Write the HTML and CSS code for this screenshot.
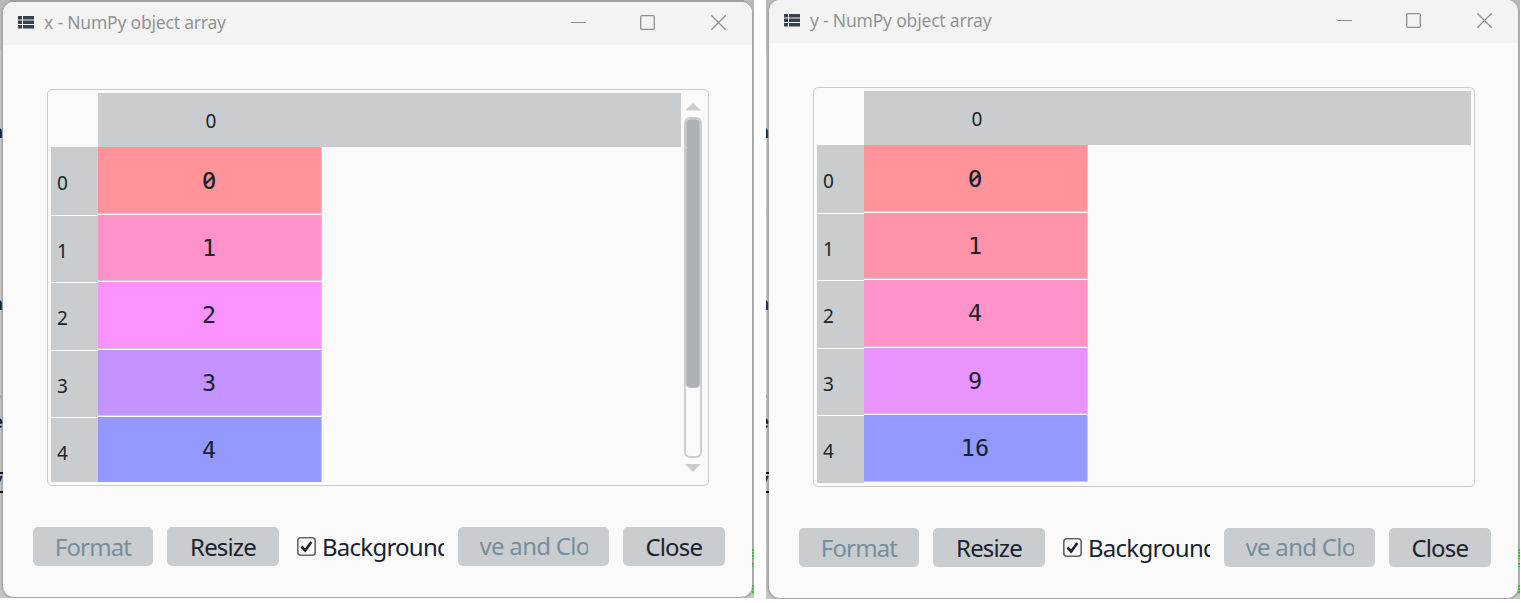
FILE: index.html
```
<!DOCTYPE html>
<html lang="en">
<head>
<meta charset="utf-8">
<title>NumPy object arrays</title>
<link rel="stylesheet" href="styles.css">
</head>
<body>
<main class="screens">
  <section class="desktop desktop-x">
    <div class="behind" aria-hidden="true">
      <i class="peek p1">a</i><i class="peek p2">a</i><i class="peek p3">e</i><i class="peek p4">7</i>
      <i class="green g1"></i><i class="green g2"></i><i class="green g3"></i>
    </div>
    <div class="window">
      <header class="titlebar">
        <svg class="app-icon" width="16" height="13" viewBox="0 0 16 13"><path fill="#36404e" d="M0 0h4v3.500H0zM5 0h11v3.500H5zM0 4.500h4v3.500H0zM5 4.500h11v3.500H5zM0 9h4v3.500H0zM5 9h11v3.500H5z"/></svg>
        <h1 class="title">x - NumPy object array</h1>
        <svg class="controls" width="156" height="16" viewBox="0 0 156 16" fill="none" stroke="#8f8f8f" stroke-width="1.3"><path stroke-width="1" d="M0 7.500h15"/><rect x="69.700" y=".7" width="13.600" height="13.600" rx="1.200"/><path d="M140.300.3l14.400 14.400M154.700.3l-14.400 14.400"/></svg>
      </header>
      <div class="table">
        <div class="index">
          <div class="corner"></div>
          <div class="rh">0</div><div class="rh">1</div><div class="rh">2</div><div class="rh">3</div><div class="rh">4</div>
        </div>
        <div class="data">
          <div class="colhead"><span>0</span></div>
          <div class="cell red">0</div><div class="cell pink">1</div><div class="cell magenta">2</div><div class="cell purple">3</div><div class="cell blue">4</div>
        </div>
        <div class="scroll">
          <svg width="16" height="8" viewBox="0 0 16 8"><path fill="#c9cdd0" d="M0 7.500L8 0l8 7.500z"/></svg>
          <div class="track"><div class="thumb"></div></div>
          <svg width="16" height="8" viewBox="0 0 16 8"><path fill="#c9cdd0" d="M0 0h16L8 8z"/></svg>
        </div>
      </div>
      <footer class="actions">
        <button class="btn format" disabled>Format</button>
        <button class="btn resize">Resize</button>
        <label class="check"><svg width="19" height="19" viewBox="0 0 19 19" fill="none"><rect x=".8" y=".8" width="17.400" height="17.400" rx="3" stroke="#60656f" stroke-width="1.600"/><path d="M4.500 9.500l3.700 4L14.300 5" stroke="#19232d" stroke-width="2.600"/></svg><span>Background</span></label>
        <button class="btn save" disabled><span>ve and Clo</span></button>
        <button class="btn close">Close</button>
      </footer>
    </div>
  </section>

  <section class="desktop desktop-y">
    <div class="behind" aria-hidden="true">
      <i class="peek p1">a</i><i class="peek p2">a</i><i class="peek p3">e</i><i class="peek p4">7</i>
      <i class="green g1"></i><i class="green g2"></i><i class="green g3"></i>
    </div>
    <div class="window">
      <header class="titlebar">
        <svg class="app-icon" width="16" height="13" viewBox="0 0 16 13"><path fill="#36404e" d="M0 0h4v3.500H0zM5 0h11v3.500H5zM0 4.500h4v3.500H0zM5 4.500h11v3.500H5zM0 9h4v3.500H0zM5 9h11v3.500H5z"/></svg>
        <h1 class="title">y - NumPy object array</h1>
        <svg class="controls" width="156" height="16" viewBox="0 0 156 16" fill="none" stroke="#8f8f8f" stroke-width="1.3"><path stroke-width="1" d="M0 7.500h15"/><rect x="69.700" y=".7" width="13.600" height="13.600" rx="1.200"/><path d="M140.300.3l14.400 14.400M154.700.3l-14.400 14.400"/></svg>
      </header>
      <div class="table">
        <div class="index">
          <div class="corner"></div>
          <div class="rh">0</div><div class="rh">1</div><div class="rh">2</div><div class="rh">3</div><div class="rh">4</div>
        </div>
        <div class="data">
          <div class="colhead"><span>0</span></div>
          <div class="cell red">0</div><div class="cell rose">1</div><div class="cell pink">4</div><div class="cell orchid">9</div><div class="cell blue">16</div>
        </div>
      </div>
      <footer class="actions">
        <button class="btn format" disabled>Format</button>
        <button class="btn resize">Resize</button>
        <label class="check"><svg width="19" height="19" viewBox="0 0 19 19" fill="none"><rect x=".8" y=".8" width="17.400" height="17.400" rx="3" stroke="#60656f" stroke-width="1.600"/><path d="M4.500 9.500l3.700 4L14.300 5" stroke="#19232d" stroke-width="2.600"/></svg><span>Background</span></label>
        <button class="btn save" disabled><span>ve and Clo</span></button>
        <button class="btn close">Close</button>
      </footer>
    </div>
  </section>
</main>
</body>
</html>
```

FILE: styles.css
```
* { box-sizing: border-box; }
body { margin: 0; background: #fff; overflow: hidden; font-family: "Noto Sans", "Open Sans", sans-serif; color: #19232d; }
.screens { display: flex; gap: 12px; align-items: flex-start; height: 603px; }

/* Desktop showing through around each window */
.desktop { position: relative; flex: none; width: 754px; height: 598px; padding: 1px 0 0 2px; overflow: hidden; background: linear-gradient(#b6babd 0 49px, #c9c9c9 49px 215px, #bfbfbf 215px 216px, #c9c9c9 216px 395px, #a9a9a9 395px 398px, #c4c4c4 398px); }
.desktop-y { height: 599px; padding-top: 0; }
.behind { position: absolute; inset: 0; z-index: 1; }
.desktop-x .behind::before { content: ""; position: absolute; top: 0; left: 10px; right: 10px; height: 2px; background: #a0a0a0; }
.peek { position: absolute; left: 0; width: 3px; height: 22px; overflow: hidden; font: 700 18px/22px "Noto Sans", sans-serif; direction: rtl; color: #16213c; }
.p1 { top: 120px; }
.p2 { top: 292px; }
.p3 { top: 410px; color: #222; }
.p4 { top: 472px; height: 21px; border: solid #111; border-width: 2px 0; line-height: 16px; font-weight: 400; }
.green { position: absolute; right: 0; width: 2px; background: repeating-linear-gradient(#45b63c 0 2px, #9dbd8a 2px 3px); }
.g1 { top: 549px; height: 10px; }
.g2 { top: 563px; height: 4px; }
.g3 { top: 585px; height: 9px; }

.window { position: relative; width: 751px; height: 597px; display: flex; flex-direction: column; overflow: hidden; border: 1px solid #a5a5a5; border-radius: 12px; background: #fafafa; box-shadow: 0 0 0 1px #b0b0b0; }
.desktop-y .window { height: 599px; border-top: 0; }
.titlebar { flex: none; display: flex; align-items: center; height: 43px; padding: 0 25px 0 15px; background: #f3f3f3; }
.desktop-x .titlebar { padding-bottom: 2px; }
.desktop-y .titlebar { padding-bottom: 2px; }
.app-icon { flex: none; }
.title { margin: 0 0 0 10px; padding-bottom: 2px; flex: 1; font-size: 17.500px; font-weight: 400; line-height: 24px; letter-spacing: -0.2px; color: #939393; white-space: nowrap; }
.controls { flex: none; }

/* Array grid */
.table { flex: none; display: flex; width: 662px; height: 397px; margin: 44px 0 0 44px; padding: 3px; border: 1px solid #c9cdd0; border-radius: 5px; }
.desktop-y .table { height: 400px; }
.index { flex: none; width: 47px; display: flex; flex-direction: column; }
.corner, .colhead { flex: none; height: 54px; }
.rh { flex: none; height: 67px; padding-left: 6px; background: #c9cdd0; border-bottom: 1px solid #fafafa; font-size: 19px; line-height: 70px; }
.rh:nth-child(2) { height: 69px; line-height: 73px; }
.rh:nth-child(4) { height: 68px; }
.rh:last-child { height: 64px; border: 0; line-height: 71px; }
.desktop-y .rh:last-child { height: 67px; }
.data { flex: 1; display: flex; flex-direction: column; min-width: 0; }
.colhead { background: #c9cdd0; font-size: 19px; line-height: 56px; }
.colhead span { display: block; width: 226px; text-align: center; }
.cell { flex: none; width: 224px; height: 67px; padding-right: 1px; border-right: 1px solid #c9cdd0; border-bottom: 1px solid #fff; box-shadow: inset 0 -1px #c9cdd0; font: 23.500px/67px "DejaVu Sans Mono", monospace; text-align: center; }
.cell:nth-child(2), .cell:nth-child(4) { height: 68px; }
.cell:nth-child(2) { font: 500 24px/65px "Noto Sans", sans-serif; font-feature-settings: "zero"; }
.cell:last-child { height: 65px; border-bottom: 0; box-shadow: none; }
.desktop-y .cell:last-child { height: 67px; box-shadow: inset 0 -1px #c9cdd0; }
.red { background: #ff9399; }
.rose { background: #ff93a9; }
.pink { background: #ff93c9; }
.magenta { background: #fa93ff; }
.orchid { background: #e993ff; }
.purple { background: #c493ff; }
.blue { background: #9399ff; }

.scroll { flex: none; width: 24px; padding: 10px 0 10px 3px; display: flex; flex-direction: column; gap: 6px; }
.scroll svg { margin-left: 1px; flex: none; }
.track { flex: 1; width: 18px; border: 2px solid #c9cdd0; border-radius: 6px; }
.thumb { width: 14px; height: 269px; background: #acb1b5; border: 1px solid #bdc2c5; border-radius: 4px; }

/* Bottom bar */
.actions { flex: none; display: flex; align-items: center; gap: 14px; margin: 41px 0 0 30px; height: 38.500px; }
.btn { flex: none; height: 38.500px; padding: 1px 0 0; border: 0; border-radius: 5px; background: #c9cdd0; color: #19232d; font: 24px/36px "Noto Sans", sans-serif; letter-spacing: -0.85px; }
.btn:disabled { color: #788d9c; }
.format { width: 120px; }
.resize { width: 112px; }
.close { width: 101.500px; }
.save { width: 151px; display: flex; justify-content: center; }
.save span { width: 108px; overflow: hidden; white-space: nowrap; text-align: left; letter-spacing: -0.7px; }
.check { width: 147px; margin-left: 4px; display: flex; align-items: center; gap: 6px; height: 38px; overflow: hidden; white-space: nowrap; }
.check svg { flex: none; margin-top: 1px; }
.check span { padding-top: 1px; font-size: 24px; line-height: 36px; letter-spacing: -0.75px; }
```
